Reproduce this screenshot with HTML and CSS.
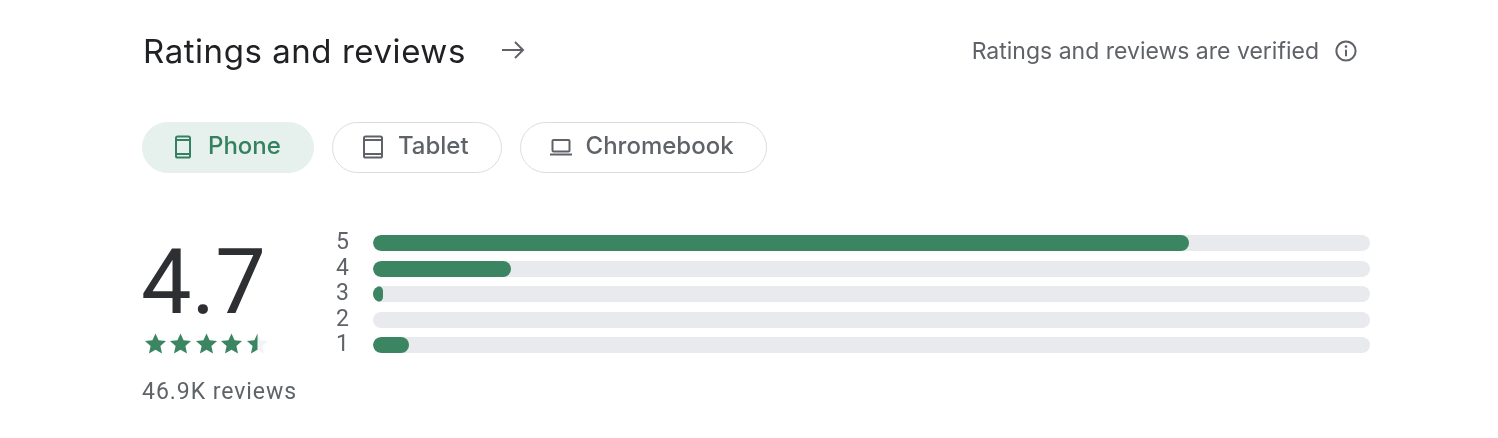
FILE: index.html
```html
<!DOCTYPE html>
<html lang="en">
<head>
<meta charset="utf-8">
<title>Ratings and reviews</title>
<link rel="stylesheet" href="styles.css">
</head>
<body>
<main class="section">
  <header class="head">
    <div class="head-left">
      <h2 class="title">Ratings and reviews</h2>
      <svg class="arrow" viewBox="0 0 24 24"><path d="M1 12h21M14 4l8 8-8 8"/></svg>
    </div>
    <div class="verified">
      <span>Ratings and reviews are verified</span>
      <svg class="info" viewBox="0 0 24 24"><circle cx="12" cy="12" r="9.6"/><path d="M12 10.8v6.4"/><circle class="dot" cx="12" cy="7.6" r="1.3"/></svg>
    </div>
  </header>
  <div class="chips">
    <div class="chip chip-on">
      <svg class="chip-icon" viewBox="0 0 24 24"><rect x="5" y="1.5" width="14" height="21" rx="1.6"/><path d="M5 5h14M5 19h14"/></svg>
      <span>Phone</span>
    </div>
    <div class="chip">
      <svg class="chip-icon" viewBox="0 0 24 24"><rect x="3" y="1.5" width="18" height="21" rx="1.6"/><path d="M3 5h18M3 19h18"/></svg>
      <span>Tablet</span>
    </div>
    <div class="chip">
      <svg class="chip-icon" viewBox="0 0 24 24"><rect x="3.5" y="5" width="17" height="11.5" rx="1"/><path d="M1 19.5h22"/></svg>
      <span>Chromebook</span>
    </div>
  </div>
  <div class="summary">
    <div class="score">
      <div class="score-num">4.7</div>
      <div class="stars">
        <svg class="star" viewBox="0 0 24 24"><path d="M12 1.5l3.2 7.2 7.8.8-5.9 5.2 1.7 7.7L12 18.4l-6.8 4 1.7-7.7L1 9.5l7.8-.8z"/></svg>
        <svg class="star" viewBox="0 0 24 24"><path d="M12 1.5l3.2 7.2 7.8.8-5.9 5.2 1.7 7.7L12 18.4l-6.8 4 1.7-7.7L1 9.5l7.8-.8z"/></svg>
        <svg class="star" viewBox="0 0 24 24"><path d="M12 1.5l3.2 7.2 7.8.8-5.9 5.2 1.7 7.7L12 18.4l-6.8 4 1.7-7.7L1 9.5l7.8-.8z"/></svg>
        <svg class="star" viewBox="0 0 24 24"><path d="M12 1.5l3.2 7.2 7.8.8-5.9 5.2 1.7 7.7L12 18.4l-6.8 4 1.7-7.7L1 9.5l7.8-.8z"/></svg>
        <svg class="star" viewBox="0 0 24 24"><path class="star-empty" d="M12 1.5l3.2 7.2 7.8.8-5.9 5.2 1.7 7.7L12 18.4l-6.8 4 1.7-7.7L1 9.5l7.8-.8z"/><path d="M12 1.5v16.9l-6.8 4 1.7-7.7L1 9.5l7.8-.8z"/></svg>
      </div>
      <div class="count">46.9K reviews</div>
    </div>
    <div class="bars">
      <div class="row"><span class="num">5</span><div class="track"><div class="fill" style="width:81.8%"></div></div></div>
      <div class="row"><span class="num">4</span><div class="track"><div class="fill" style="width:13.8%"></div></div></div>
      <div class="row"><span class="num">3</span><div class="track"><div class="fill" style="width:1%"></div></div></div>
      <div class="row"><span class="num">2</span><div class="track"></div></div>
      <div class="row"><span class="num">1</span><div class="track"><div class="fill" style="width:3.6%"></div></div></div>
    </div>
  </div>
</main>
</body>
</html>
```
FILE: styles.css
```css
* { box-sizing: border-box; }
html, body { margin: 0; background: #fff; }
body { font-family: Roboto, "Liberation Sans", sans-serif; }
.section {
  width: 1498px;
  height: 438px;
  padding: 30px 128px 0 142px;
  overflow: hidden;
  filter: blur(0.6px);
}
.head { display: flex; align-items: center; justify-content: space-between; height: 42px; }
.head-left { display: flex; align-items: center; gap: 35px; }
.title { margin: 0; font-family: Inter, Roboto, sans-serif; font-size: 33px; letter-spacing: 0.55px; font-weight: 400; color: #202124; line-height: 42px; padding-left: 1px; }
.arrow { width: 24px; height: 24px; margin-top: -2px; fill: none; stroke: #5f6368; stroke-width: 2; }
.verified { display: flex; align-items: center; gap: 15px; color: #5f6368; font-family: Inter, Roboto, sans-serif; font-size: 23px; padding-right: 12px; }
.info { width: 24px; height: 24px; fill: none; stroke: #5f6368; stroke-width: 2; }
.info .dot { fill: #5f6368; stroke: none; }
.chips { display: flex; gap: 18px; margin-top: 50px; }
.chip {
  height: 51px;
  padding: 0 32px 2px 28px;
  display: flex;
  align-items: center;
  gap: 13px;
  border: 1px solid #dadce0;
  border-radius: 26px;
  color: #5f6368;
  font-family: Inter, Roboto, sans-serif;
  font-size: 24px;
  font-weight: 500;
}
.chip span { padding-bottom: 2px; }
.chip-on { background: #e6f0ed; border-color: #e6f0ed; color: #348060; }
.chip-icon { width: 24px; height: 24px; fill: none; stroke: currentColor; stroke-width: 2; flex: none; }
.summary { display: flex; margin-top: 58px; }
.score { width: 231px; }
.score-num { font-size: 90px; line-height: 92px; color: #2d2f32; margin-left: -1px; margin-top: 6px; }
.stars { display: flex; gap: 2.6px; margin-top: 3px; margin-left: 1.5px; }
.star { width: 23px; height: 23px; fill: #3b8562; }
.star-empty { fill: #f1f3f4; }
.count { font-size: 23px; letter-spacing: 0.95px; color: #5f6368; margin-top: 23px; }
.bars { flex: 1; margin-top: 4px; display: flex; flex-direction: column; gap: 9.6px; }
.row { position: relative; height: 16px; }
.num { position: absolute; left: -37px; top: -7px; font-size: 23px; line-height: 27px; color: #5f6368; }
.track { height: 16px; border-radius: 8px; background: #e8eaed; overflow: hidden; }
.fill { height: 100%; border-radius: 8px; background: #3b8562; }
```
